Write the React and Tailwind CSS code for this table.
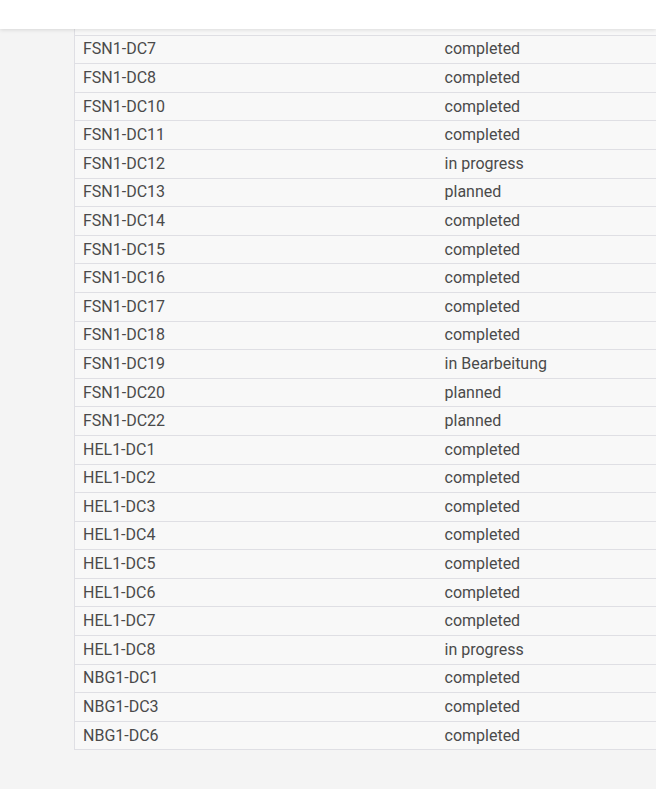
// Status-Tabelle der Standorte
const rows = [
  ['FSN1-DC6', 'completed'],
  ['FSN1-DC7', 'completed'],
  ['FSN1-DC8', 'completed'],
  ['FSN1-DC10', 'completed'],
  ['FSN1-DC11', 'completed'],
  ['FSN1-DC12', 'in progress'],
  ['FSN1-DC13', 'planned'],
  ['FSN1-DC14', 'completed'],
  ['FSN1-DC15', 'completed'],
  ['FSN1-DC16', 'completed'],
  ['FSN1-DC17', 'completed'],
  ['FSN1-DC18', 'completed'],
  ['FSN1-DC19', 'in Bearbeitung'],
  ['FSN1-DC20', 'planned'],
  ['FSN1-DC22', 'planned'],
  ['HEL1-DC1', 'completed'],
  ['HEL1-DC2', 'completed'],
  ['HEL1-DC3', 'completed'],
  ['HEL1-DC4', 'completed'],
  ['HEL1-DC5', 'completed'],
  ['HEL1-DC6', 'completed'],
  ['HEL1-DC7', 'completed'],
  ['HEL1-DC8', 'in progress'],
  ['NBG1-DC1', 'completed'],
  ['NBG1-DC3', 'completed'],
  ['NBG1-DC6', 'completed'],
];

const App = () => {
  return (
    <div className="min-h-[789px] w-[656px] overflow-hidden bg-[#f4f4f4] font-['Roboto',sans-serif] text-base text-[#4a4a4a]">
      {/* Kopfzeile */}
      <div className="fixed top-0 left-0 right-0 z-10 h-[29px] bg-white shadow-[0_1px_4px_rgba(0,0,0,0.12)]" />

      {/* Tabelle */}
      <div className="pt-[7px] pb-[38px] pl-[74px]">
        <table className="w-[700px] border-collapse border-l border-[#dfdfe4]">
          <tbody>
            {rows.map(([dc, status]) => (
              <tr key={dc} className="border-b border-[#dfdfe4] bg-[#f8f8f8]">
                <td className="w-[362px] px-2 py-[3.8px] leading-5">{dc}</td>
                <td className="px-2 py-[3.8px] leading-5">{status}</td>
              </tr>
            ))}
          </tbody>
        </table>
      </div>
    </div>
  );
};

export default App;
